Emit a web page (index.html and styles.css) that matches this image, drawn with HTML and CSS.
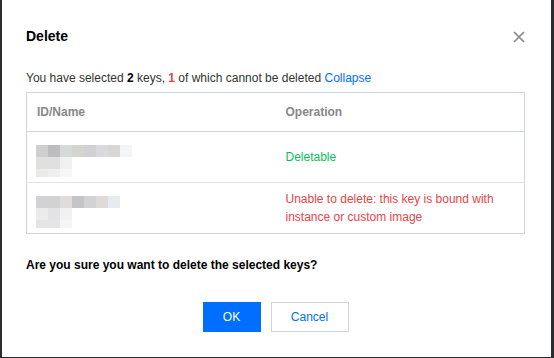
FILE: index.html
```html
<!DOCTYPE html>
<html lang="en">
<head>
    <meta charset="UTF-8">
    <title>Delete</title>
    <link rel="stylesheet" href="styles.css">
</head>
<body>
    <div class="dialog">
        <div class="dialog-header">
            <h2 class="dialog-title">Delete</h2>
            <button class="close-button" aria-label="Close">
                <svg width="12" height="12" viewBox="0 0 12 12"><path d="M1 1 L11 11 M11 1 L1 11" stroke="#888" stroke-width="1.7" fill="none"/></svg>
            </button>
        </div>

        <p class="summary">You have selected <b>2</b> keys, <b class="danger">1</b> of which cannot be deleted <a class="link">Collapse</a></p>

        <table class="key-table">
            <thead>
                <tr><th>ID/Name</th><th>Operation</th></tr>
            </thead>
            <tbody>
                <tr>
                    <td>
                        <div class="mosaic">
                            <div class="mosaic-row"><span class="p1"></span><span class="p2"></span><span class="p3"></span><span class="p4"></span><span class="p5"></span><span class="p6"></span><span class="p7"></span><span class="p8"></span></div>
                            <div class="mosaic-row"><span class="q1"></span><span class="q1"></span><span class="q2"></span></div>
                            <div class="mosaic-row short"><span class="r1"></span><span class="r2"></span><span class="r3"></span></div>
                        </div>
                    </td>
                    <td class="ok-text">Deletable</td>
                </tr>
                <tr>
                    <td>
                        <div class="mosaic">
                            <div class="mosaic-row"><span class="s1"></span><span class="s2"></span><span class="s3"></span><span class="s4"></span><span class="s2"></span><span class="s5"></span><span class="s6"></span></div>
                            <div class="mosaic-row"><span class="t1"></span><span class="t2"></span><span class="t3"></span></div>
                            <div class="mosaic-row short"><span class="u1"></span><span class="u1"></span><span class="u2"></span></div>
                        </div>
                    </td>
                    <td class="danger">Unable to delete: this key is bound with instance or custom image</td>
                </tr>
            </tbody>
        </table>

        <p class="question">Are you sure you want to delete the selected keys?</p>

        <div class="dialog-footer">
            <button class="btn btn-primary">OK</button>
            <button class="btn btn-default">Cancel</button>
        </div>
    </div>
</body>
</html>
```

FILE: styles.css
```css
body {
    margin: 0;
    background-color: #2b2c30;
    font-family: "Liberation Sans", Arial, sans-serif;
    font-size: 12px;
    color: #333;
}
.dialog {
    margin: 0 3px 0 2px;
    height: 357px;
    box-sizing: border-box;
    background-color: #fff;
    padding: 26px 26px 0 24px;
    display: flex;
    flex-direction: column;
}
.dialog-header {
    display: flex;
    justify-content: space-between;
    align-items: center;
    height: 20px;
}
.dialog-title {
    margin: 0;
    font-size: 14px;
    line-height: 20px;
    color: #000;
}
.close-button {
    border: none;
    background: none;
    padding: 0;
    width: 12px;
    height: 12px;
    display: flex;
    margin-top: 1px;
}
.summary {
    margin: 23px 0 5px;
    line-height: 18px;
}
.summary b {
    color: #000;
}
.summary .danger {
    color: #e54545;
}
.link {
    color: #006eff;
}
.key-table {
    width: 100%;
    border-collapse: collapse;
    border: 1px solid #cfd5de;
    table-layout: fixed;
}
.key-table th {
    text-align: left;
    color: #888;
    font-weight: bold;
    height: 39px;
    padding: 0 10px;
    box-sizing: border-box;
    border-bottom: 1px solid #cfd5de;
}
.key-table td {
    height: 51px;
    padding: 6px 10px;
    box-sizing: border-box;
    line-height: 18px;
    border-bottom: 1px solid #e5e5e5;
    vertical-align: middle;
}
.key-table tr:last-child td {
    height: 51px;
    border-bottom: 1px solid #cfd5de;
}
.ok-text {
    color: #0abf5b;
}
.danger {
    color: #e54545;
}
.mosaic {
    display: flex;
    flex-direction: column;
    margin: 4px 0 -4px -1px;
}
.mosaic-row {
    display: flex;
}
.mosaic-row span {
    width: 12px;
    height: 12px;
}
.mosaic-row.short span {
    height: 8px;
}
.p1 { background: #d0cfcf; }
.p2 { background: #bdbdbf; }
.p3 { background: #d7d8da; }
.p4 { background: #d5d5cf; }
.p5 { background: #d1d1d4; }
.p6 { background: #dadadd; }
.p7 { background: #d8d7d6; }
.p8 { background: #f3f5f7; }
.q1 { background: #e0e0e0; }
.q2 { background: #eef0f2; }
.r1 { background: #ebeae9; }
.r2 { background: #efefef; }
.r3 { background: #f7f7f7; }
.s1 { background: #d2d1d3; }
.s2 { background: #d2d2d5; }
.s3 { background: #dfdcdb; }
.s4 { background: #c5c5c8; }
.s5 { background: #dedad8; }
.s6 { background: #e6ebef; }
.t1 { background: #ebebeb; }
.t2 { background: #e3e3e6; }
.t3 { background: #f1f1f3; }
.u1 { background: #e5e4e4; }
.u2 { background: #f5f5f5; }
.question {
    margin: 22px 0 0;
    line-height: 18px;
    font-weight: bold;
    color: #000;
}
.dialog-footer {
    margin-top: 28px;
    display: flex;
    justify-content: center;
    gap: 10px;
}
.btn {
    height: 30px;
    padding: 0;
    font-family: inherit;
    font-size: 12px;
    border: 1px solid transparent;
    cursor: pointer;
}
.btn-primary {
    width: 58px;
    background-color: #006eff;
    color: #fff;
}
.btn-default {
    width: 78px;
    background-color: #fff;
    border-color: #cfd5de;
    color: #006eff;
}
```
